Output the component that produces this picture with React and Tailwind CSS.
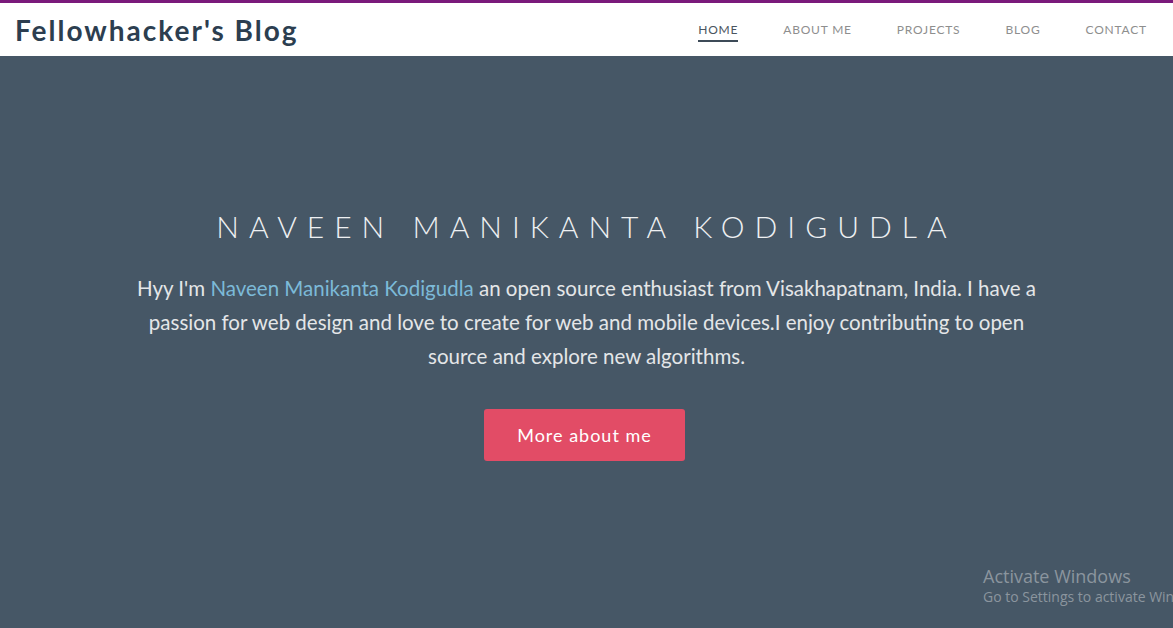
import React from "react";

const navItems = ["Home", "About me", "Projects", "Blog", "Contact"];

function Header() {
  return (
    <header className="bg-white border-t-[3px] border-[#7a1a7b] h-[56px] flex items-center justify-between pl-[15px] pr-[26px]">
      <h1 className="text-[28px] font-bold tracking-[2px] text-[#2c3e50] leading-none">
        Fellowhacker's Blog
      </h1>
      <nav className="flex items-center gap-[45px] text-[12px] uppercase tracking-[0.8px]">
        {navItems.map((item, i) => (
          <a
            key={item}
            href="#"
            className={
              i === 0
                ? "text-[#4a5560] border-b-2 border-[#3d4b58] pb-[1px] pt-[3px]"
                : "text-[#8e8e8e] pb-[3px] pt-[3px]"
            }
          >
            {item}
          </a>
        ))}
      </nav>
    </header>
  );
}

function Hero() {
  return (
    <section className="relative bg-[#465766] h-[572px] flex flex-col items-center pt-[155px]">
      <h2 className="text-[30px] font-light tracking-[10px] text-[#eef0f2] leading-none">
        NAVEEN MANIKANTA KODIGUDLA
      </h2>
      <p className="mt-[30px] w-[960px] text-center text-[20.5px] leading-[34px] text-[#e4e6e8]">
        Hyy I'm <a href="#" className="text-[#7cbad8]">Naveen Manikanta Kodigudla</a> an open source enthusiast from
        Visakhapatnam, India. I have a<br />
        passion for web design and love to create for web and mobile devices.I enjoy contributing to open<br />
        source and explore new algorithms.
      </p>
      <button className="mt-[36px] mr-[4px] w-[201px] h-[52px] rounded-[3px] bg-[#e24c66] text-white text-[18px] tracking-[1px]">
        More about me
      </button>
      <div className="absolute left-[983px] top-[508px] text-[#8b959e] font-['Open_Sans',sans-serif] whitespace-nowrap">
        <div className="text-[18px] leading-[24px]">Activate Windows</div>
        <div className="text-[14px] leading-[18px]">Go to Settings to activate Windows.</div>
      </div>
    </section>
  );
}

export default function App() {
  return (
    <div className="w-full h-[628px] overflow-hidden font-['Lato',sans-serif]">
      <Header />
      <Hero />
    </div>
  );
}
